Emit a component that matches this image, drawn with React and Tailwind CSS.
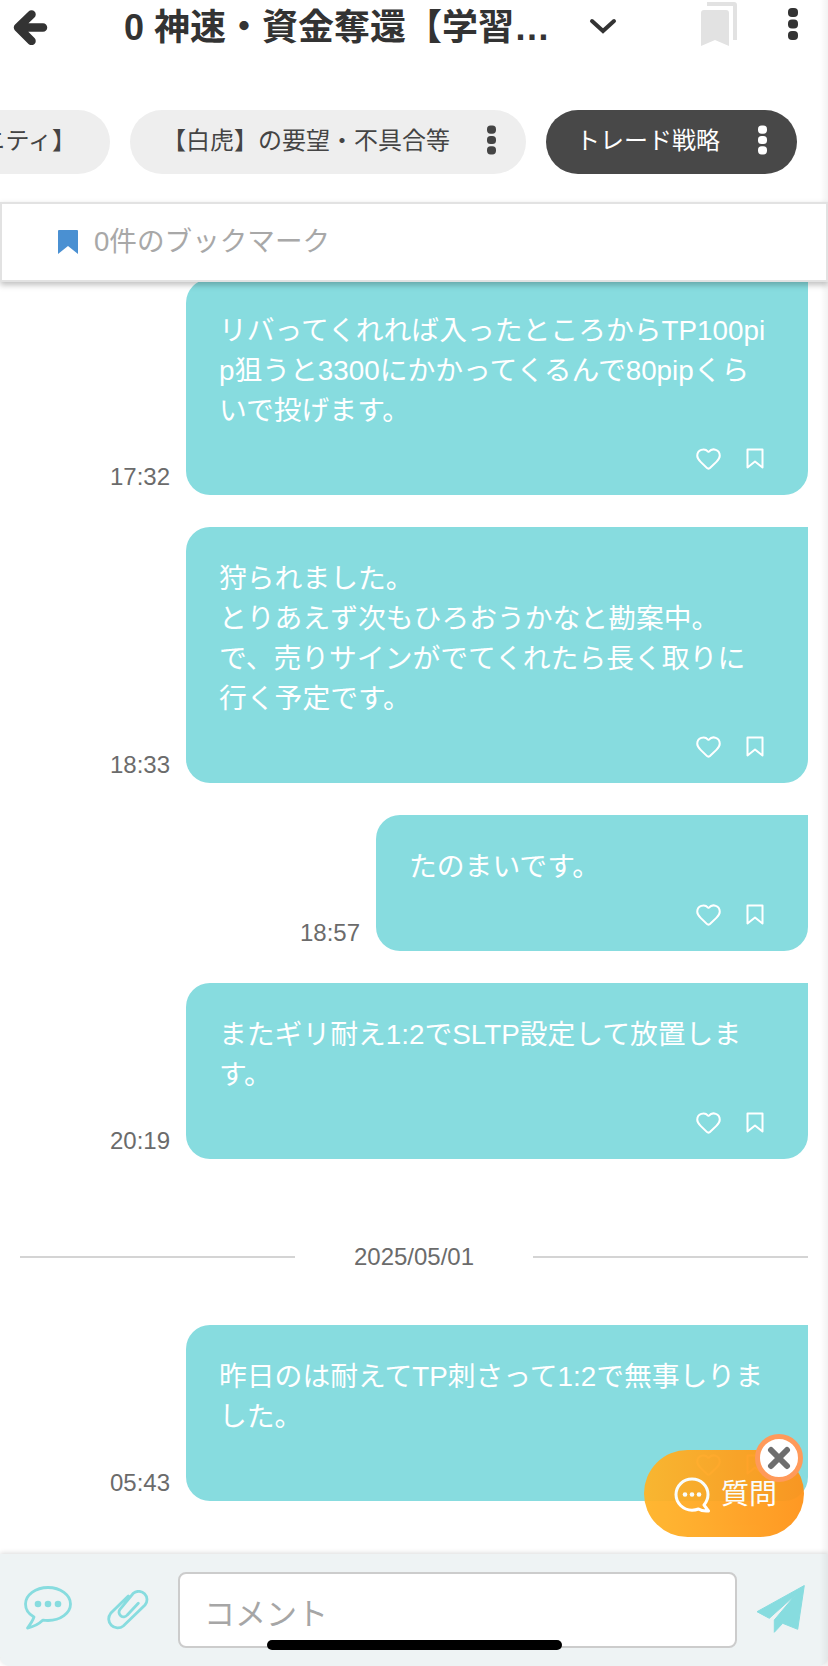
import { Heart } from "lucide-react";

const messages = [
  { time: "17:32", top: true, lines: ["リバってくれれば入ったところからTP100pi", "p狙うと3300にかかってくるんで80pipくら", "いで投げます。"] },
  { time: "18:33", lines: ["狩られました。", "とりあえず次もひろおうかなと勘案中。", "で、売りサインがでてくれたら長く取りに", "行く予定です。"] },
  { time: "18:57", short: true, lines: ["たのまいです。"] },
  { time: "20:19", lines: ["またギリ耐え1:2でSLTP設定して放置しま", "す。"] },
];

const Dots = ({ className }) => (
  <svg viewBox="0 0 10 32" className={className} fill="currentColor">
    <rect x="0" y="0" width="10" height="9" rx="4" />
    <rect x="0" y="11.5" width="10" height="9" rx="4" />
    <rect x="0" y="23" width="10" height="9" rx="4" />
  </svg>
);

const Message = ({ time, lines, short, top }) => (
  <div className={`flex items-end justify-end gap-4 pr-5 ${top ? "-mt-[3px]" : "mt-8"}`}>
    <span className="pb-[1px] text-[24px] leading-[34px] text-[#6b6b6b]">{time}</span>
    <div className={`${short ? "w-[432px]" : "w-[622px]"} rounded-l-[24px] rounded-br-[24px] bg-[#87dcdf] pl-[33px] pr-[44px] pt-[32px] pb-[27px] text-white`}>
      {lines.map((line) => (
        <p key={line} className="whitespace-nowrap text-[27.8px] leading-[40px]">{line}</p>
      ))}
      <div className="mt-[17px] flex h-5 items-center justify-end gap-[24px]">
        <Heart size={27} strokeWidth={1.8} />
        <svg width="18" height="21" viewBox="0 0 18 21" fill="none" stroke="currentColor" strokeWidth="2">
          <path d="M1.5 1.5h15v18L9 13.5l-7.500 6z" strokeLinejoin="round" />
        </svg>
      </div>
    </div>
  </div>
);

export default function App() {
  return (
    <div className="relative flex h-[1666px] w-[828px] flex-col overflow-hidden bg-white font-['Liberation_Sans','Noto_Sans_CJK_JP',sans-serif]">
      {/* HEADER */}
      <div className="flex h-[55px] items-start text-[#333]">
        <svg width="36" height="35" viewBox="0 0 36 35" fill="none" stroke="currentColor" strokeWidth="8.500" strokeLinecap="round" strokeLinejoin="round" className="ml-[12px] mt-[10px] shrink-0">
          <path d="M19.500 4.500 6 17.500 19.500 31M7 17.500h24" />
        </svg>
        <h1 className="ml-[76px] mt-[3px] w-[432px] shrink-0 whitespace-nowrap text-[36px] font-bold leading-[50px]">0 神速・資金奪還【学習…</h1>
        <svg width="28" height="16" viewBox="0 0 28 16" fill="none" stroke="currentColor" strokeWidth="4" strokeLinecap="round" className="ml-[33px] mt-[18px] shrink-0">
          <path d="M3 3l11 10L25 3" />
        </svg>
        <svg width="38" height="44" viewBox="0 0 38 44" className="ml-[84px] mt-[2px] shrink-0" fill="#e2e2e2">
          <path d="M6 0h27a3 3 0 0 1 3 3v35h-4V4H6z" />
          <path d="M0 11a3 3 0 0 1 3-3h22a3 3 0 0 1 3 3v33l-14-6-14 6z" />
        </svg>
        <Dots className="ml-[49px] mt-[8px] h-8 w-[10px] shrink-0" />
      </div>

      {/* TABS */}
      <div className="mt-[55px] flex h-16 justify-end gap-5 overflow-hidden pr-[31px] text-[24px] leading-[62px]">
        <div className="flex shrink-0 items-start rounded-full bg-[#eee] pl-8 pr-[34px] text-[#444]">【白虎コミュニティ】</div>
        <div className="flex w-[396px] shrink-0 items-start justify-between rounded-full bg-[#eee] pl-[32px] pr-[30px] text-[#444]">
          <span>【白虎】の要望・不具合等</span>
          <Dots className="mt-[15px] h-[30px] w-[9px] text-[#444]" />
        </div>
        <div className="flex w-[251px] shrink-0 items-start justify-between rounded-full bg-[#484848] pl-[30px] pr-[30px] text-white">
          <span>トレード戦略</span>
          <Dots className="mt-[15px] h-[30px] w-[9px]" />
        </div>
      </div>

      {/* BOOKMARK BAR */}
      <div className="relative z-10 mt-7 flex h-[80px] items-center border-2 border-[#e2e2e2] bg-white pl-[56px] shadow-[0_3px_6px_rgba(0,0,0,0.25)]">
        <svg width="20" height="24" viewBox="0 0 20 24" fill="#4a90d2">
          <path d="M0 1a1 1 0 0 1 1-1h18a1 1 0 0 1 1 1v23l-10-8-10 8z" />
        </svg>
        <span className="ml-[16px] text-[27.6px] text-[#a8a8a8]">0件のブックマーク</span>
      </div>

      {/* MESSAGES */}
      <div className="flex-1 overflow-hidden">
        {messages.map((m) => (
          <Message key={m.time} {...m} />
        ))}

        <div className="mt-[79px] flex items-center pl-5 pr-5">
          <div className="h-[2px] w-[275px] bg-[#d4d4d4]" />
          <span className="flex-1 text-center text-[24px] leading-[38px] text-[#6b6b6b]">2025/05/01</span>
          <div className="h-[2px] w-[275px] bg-[#d4d4d4]" />
        </div>

        <div className="mt-[49px]">
          <Message time="05:43" lines={["昨日のは耐えてTP刺さって1:2で無事しりま", "した。"]} />
        </div>
      </div>

      {/* INPUT */}
      <div className="flex h-[112px] shrink-0 items-start rounded-b-[10px] bg-[#eef3f4] shadow-[0_-1px_5px_rgba(0,0,0,0.15)]">
        <svg width="50" height="44" viewBox="0 0 50 44" fill="none" className="ml-[23px] mt-[32px] shrink-0 text-[#87dcdf]">
          <path d="M25 1.500C37.500 1.500 47.500 9 47.500 18S37.500 34.500 25 34.500c-2 0-3.500-.1-5-.4C16 38 10 41 4.500 42 7.500 38 10 34 11 31 5.500 28 2.500 23 2.500 18 2.500 9 12.500 1.500 25 1.500z" stroke="currentColor" strokeWidth="2.800" strokeLinejoin="round" />
          <circle cx="15" cy="18" r="3.300" fill="currentColor" />
          <circle cx="25" cy="18" r="3.300" fill="currentColor" />
          <circle cx="35" cy="18" r="3.300" fill="currentColor" />
        </svg>
        <svg width="42" height="42" viewBox="0 0 42 42" fill="none" stroke="#87dcdf" strokeWidth="2.800" strokeLinecap="round" className="ml-[34px] mt-[36px] shrink-0">
          <path d="M21.300 6 3.700 23.300A9 9 0 0 0 16.300 36L38 15A8.300 8.300 0 0 0 26.300 3.300L13 19.300A4.600 4.600 0 0 0 20.300 25L31.300 13.300" />
        </svg>
        <div className="ml-[29px] mt-[18px] flex h-[76px] w-[559px] shrink-0 items-start rounded-[8px] border-2 border-[#ccc] bg-white pl-[24px] pt-[6px] text-[31px] leading-[70px] text-[#a6a6a6]">コメント</div>
        <svg width="50" height="48" viewBox="0 0 50 48" fill="#87dcdf" stroke="#87dcdf" strokeWidth="1" strokeLinejoin="round" className="ml-[19px] mt-[31px] shrink-0">
          <path d="M48.300.5 1 26.700l12.300 6.600L40 9.300 18.300 35v12.300l8.400-9 15 6z" />
        </svg>
      </div>

      {/* QUESTION BUTTON */}
      <div className="absolute left-[644px] top-[1450px] flex h-[87px] w-[160px] items-center justify-center gap-[9px] rounded-full bg-linear-to-r from-[#ffb428] to-[#ff9318] pl-[3px] pt-[2px] text-[28px] text-white opacity-95">
        <svg width="38" height="36" viewBox="0 0 38 36" fill="none" className="shrink-0">
          <path d="M18 2c9 0 16 7 16 15.500 0 4-1.500 7.500-4 10.500l4.500 6c-3.500.3-7.500-.2-10-2-2 .8-4.300 1.200-6.500 1.200C9 33 2 26 2 17.500S9 2 18 2z" stroke="white" strokeWidth="3" strokeLinejoin="round" />
          <circle cx="11" cy="17.500" r="2.300" fill="white" />
          <circle cx="18" cy="17.500" r="2.300" fill="white" />
          <circle cx="25" cy="17.500" r="2.300" fill="white" />
        </svg>
        <span>質問</span>
      </div>
      <div className="absolute left-[755px] top-[1434px] flex h-12 w-12 items-center justify-center rounded-full border-[5px] border-[#ff9a5a] bg-white">
        <svg width="24" height="24" viewBox="0 0 24 24" stroke="#6e6e6e" strokeWidth="6" strokeLinecap="round">
          <path d="M4 4l16 16M20 4 4 20" />
        </svg>
      </div>

      {/* HOME INDICATOR + RIGHT EDGE */}
      <div className="absolute left-[267px] top-[1640px] h-[10px] w-[295px] rounded-full bg-black" />
      <div className="pointer-events-none absolute right-0 top-0 h-full w-2 bg-linear-to-r from-transparent to-black/5" />
    </div>
  );
}
